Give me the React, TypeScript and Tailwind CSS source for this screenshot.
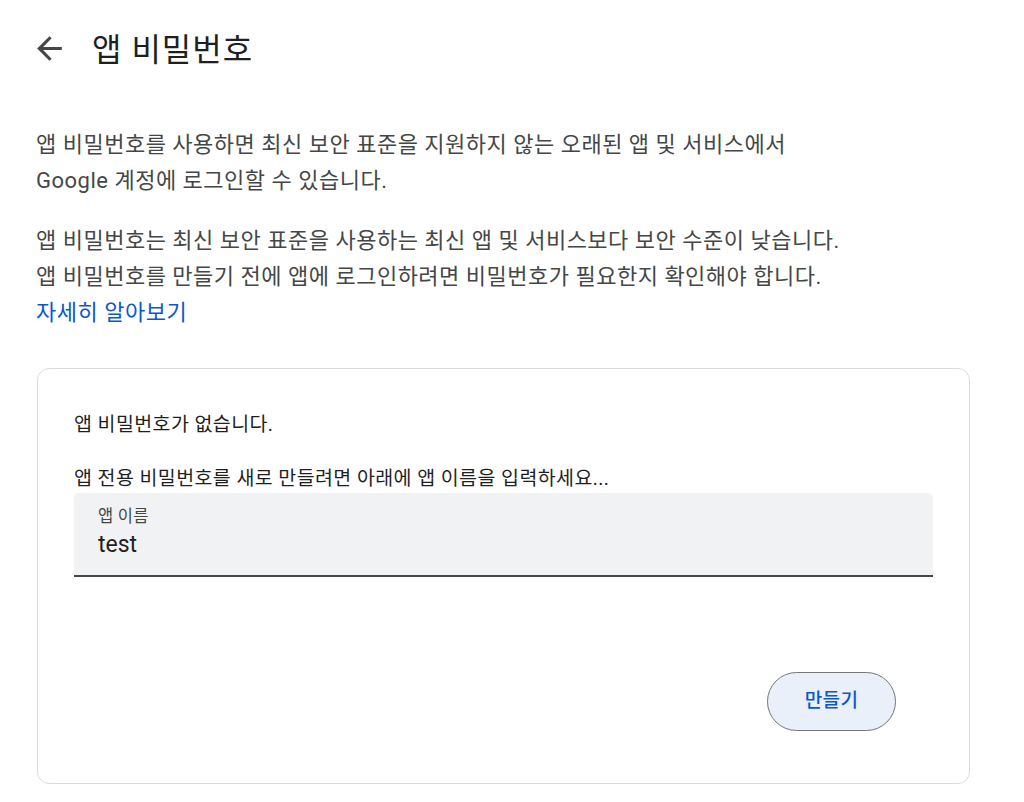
export default function App() {
  return (
    <div
      className="min-h-screen bg-white px-[36px] text-[#444746]"
      style={{ fontFamily: "Roboto, 'Noto Sans CJK KR', 'Noto Sans', sans-serif" }}
    >
      <header className="flex h-[96px] items-center">
        <button type="button" aria-label="뒤로" className="-ml-[5px] flex h-[37px] w-[37px] items-center justify-center text-[#444746]">
          <svg viewBox="0 0 24 24" className="h-[37px] w-[37px]" fill="currentColor">
            <path d="M20 11H7.83l5.59-5.59L12 4l-8 8 8 8 1.41-1.41L7.83 13H20v-2z" />
          </svg>
        </button>
        <h1 className="mt-[3px] ml-[24px] text-[32px] font-normal leading-[40px] tracking-[1px] text-[#1f1f1f]">
          앱 비밀번호
        </h1>
      </header>

      <p className="mt-[31px] text-[22px] leading-[36px] tracking-[0.5px]">
        앱 비밀번호를 사용하면 최신 보안 표준을 지원하지 않는 오래된 앱 및 서비스에서
        <br />
        Google 계정에 로그인할 수 있습니다.
      </p>

      <p className="mt-[24px] text-[22px] leading-[36px] tracking-[0.5px]">
        앱 비밀번호는 최신 보안 표준을 사용하는 최신 앱 및 서비스보다 보안 수준이 낮습니다.
        <br />
        앱 비밀번호를 만들기 전에 앱에 로그인하려면 비밀번호가 필요한지 확인해야 합니다.
        <br />
        <a href="#" className="text-[#0b57d0]">자세히 알아보기</a>
      </p>

      <section className="mt-[37px] ml-px w-[933px] rounded-[12px] border border-[#dadce0] px-[36px] pt-[43px] pb-[52px]">
        <p className="text-[19.5px] leading-[26px] tracking-[0.4px] text-[#1f1f1f]">앱 비밀번호가 없습니다.</p>
        <p className="mt-[28px] text-[19.5px] leading-[26px] tracking-[0.4px] text-[#1f1f1f]">
          앱 전용 비밀번호를 새로 만들려면 아래에 앱 이름을 입력하세요...
        </p>

        <label className="mt-px flex h-[84px] flex-col rounded-t-[5px] border-b-2 border-[#444746] bg-[#f0f2f4] px-[24px] pt-[14px]">
          <span className="text-[16.5px] leading-[20px] tracking-[0.3px] text-[#444746]">앱 이름</span>
          <input
            defaultValue="test"
            className="mt-[4px] bg-transparent text-[23px] leading-[28px] text-[#1f1f1f] outline-none"
          />
        </label>

        <div className="mt-[95px] flex justify-end pr-[37px]">
          <button
            type="button"
            className="h-[59px] w-[129px] rounded-full border border-[#747775] bg-[#eaf0fa] text-[19px] font-medium tracking-[0.3px] text-[#0b57d0]"
          >
            만들기
          </button>
        </div>
      </section>
    </div>
  );
}
